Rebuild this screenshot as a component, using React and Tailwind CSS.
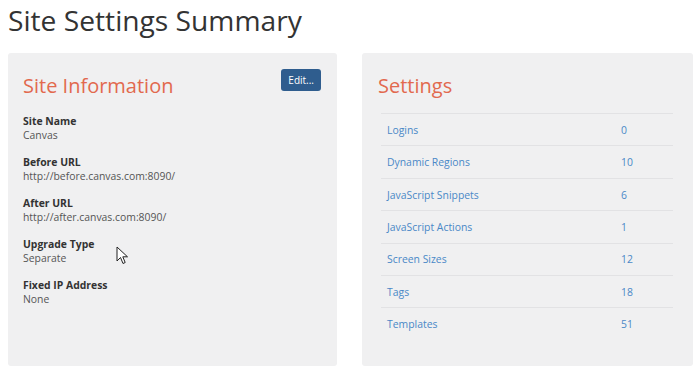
const settings = [
  { name: 'Logins', count: 0 },
  { name: 'Dynamic Regions', count: 10 },
  { name: 'JavaScript Snippets', count: 6 },
  { name: 'JavaScript Actions', count: 1 },
  { name: 'Screen Sizes', count: 12 },
  { name: 'Tags', count: 18 },
  { name: 'Templates', count: 51 },
];

const siteInfo = [
  { label: 'Site Name', value: 'Canvas' },
  { label: 'Before URL', value: 'http://before.canvas.com:8090/' },
  { label: 'After URL', value: 'http://after.canvas.com:8090/' },
  { label: 'Upgrade Type', value: 'Separate' },
  { label: 'Fixed IP Address', value: 'None' },
];

function Cursor() {
  return (
    <svg className="absolute left-[116px] top-[246px]" width="13" height="19" viewBox="0 0 13 19">
      <path d="M1 1 L1 15 L4.5 11.5 L7 17.5 L9.2 16.5 L6.8 10.8 L11.5 10.8 Z" fill="#fff" stroke="#222" strokeWidth="1" strokeLinejoin="round" />
    </svg>
  );
}

export default function App() {
  return (
    <div className="relative w-[700px] h-[374px] bg-white overflow-hidden font-['Open_Sans',sans-serif] text-[#333]">
      <h1 className="pl-2 pt-0 text-[28.2px] leading-[40px] text-[#333]">Site Settings Summary</h1>
      <div className="flex gap-[25px] pl-2 pr-[7px] mt-[13px]">
        {/* left card */}
        <div className="w-[329px] h-[313px] bg-[#f0f0f1] rounded-[3px] px-[15px] pt-[16px]">
          <div className="flex justify-between items-start">
            <h2 className="text-[20px] leading-[34px] text-[#e2694e]">Site Information</h2>
            <button className="mr-[1px] bg-[#2f5d8e] text-white text-[10px] h-[22px] px-[7px] rounded-[3px]">Edit...</button>
          </div>
          <div className="mt-[11px] flex flex-col gap-[13px]">
            {siteInfo.map(item => (
              <div key={item.label} className="text-[10.4px] leading-[14px]">
                <div className="font-bold text-[#333]">{item.label}</div>
                <div className="text-[#555]">{item.value}</div>
              </div>
            ))}
          </div>
        </div>
        {/* right card */}
        <div className="w-[331px] h-[313px] bg-[#f0f0f1] rounded-[3px] pl-[16px] pr-[20px] pt-[16px]">
          <h2 className="text-[20px] leading-[34px] text-[#e2694e]">Settings</h2>
          <table className="ml-[3px] mt-[10px] w-[292px] border-t border-[#e2e2e4] text-[10.4px] text-[#4a88c7]">
            <tbody>
              {settings.map((s, i) => (
                <tr key={s.name} className={i < settings.length - 1 ? 'border-b border-[#e2e2e4]' : ''}>
                  <td className="h-[32.4px] pl-[6px] pt-[2px] align-middle">{s.name}</td>
                  <td className="w-[52px] pt-[2px] align-middle">{s.count}</td>
                </tr>
              ))}
            </tbody>
          </table>
        </div>
      </div>
      <Cursor />
    </div>
  );
}
